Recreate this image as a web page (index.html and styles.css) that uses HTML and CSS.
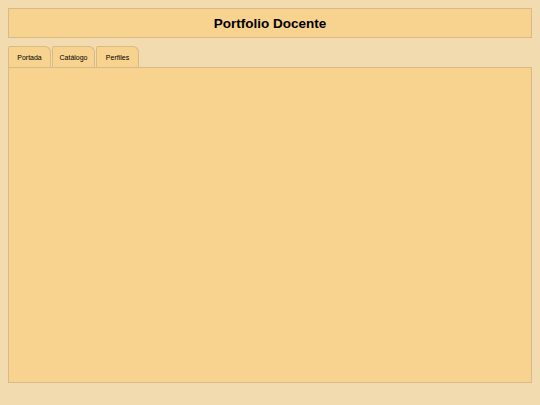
FILE: index.html
```html
<!DOCTYPE html>
<html lang="es">
<head>
    <meta charset="UTF-8">
    <meta name="viewport" content="width=device-width, initial-scale=1.0">
    <title>Portfolio Docente</title>
    <link rel="stylesheet" href="styles.css">
</head>
<body>
    <header class="title-bar">
        <h1>Portfolio Docente</h1>
    </header>

    <nav class="tabs">
        <div class="tab">Portada</div>
        <div class="tab">Catálogo</div>
        <div class="tab">Perfiles</div>
    </nav>

    <main class="panel"></main>
</body>
</html>
```

FILE: styles.css
```css
body {
    font-family: "Liberation Sans", Arial, sans-serif;
    margin: 8px;
    background-color: #f2dbae;
    color: #000;
}
.title-bar {
    background: #f8d28f;
    border: 1px solid #d7ba86;
    height: 28px;
    display: flex;
    align-items: center;
    justify-content: center;
}
.title-bar h1 {
    margin: 0;
    font-size: 13.5px;
    font-weight: bold;
}
.tabs {
    display: flex;
    gap: 1px;
    margin-top: 8px;
}
.tab {
    width: 41px;
    height: 20px;
    display: flex;
    align-items: center;
    justify-content: center;
    font-size: 7px;
    background: #f8d28f;
    border: 1px solid #d7ba86;
    border-bottom: none;
    border-radius: 2px 6px 0 0;
}
.panel {
    background: #f8d28f;
    border: 1px solid #d7ba86;
    height: 314px;
}
```
